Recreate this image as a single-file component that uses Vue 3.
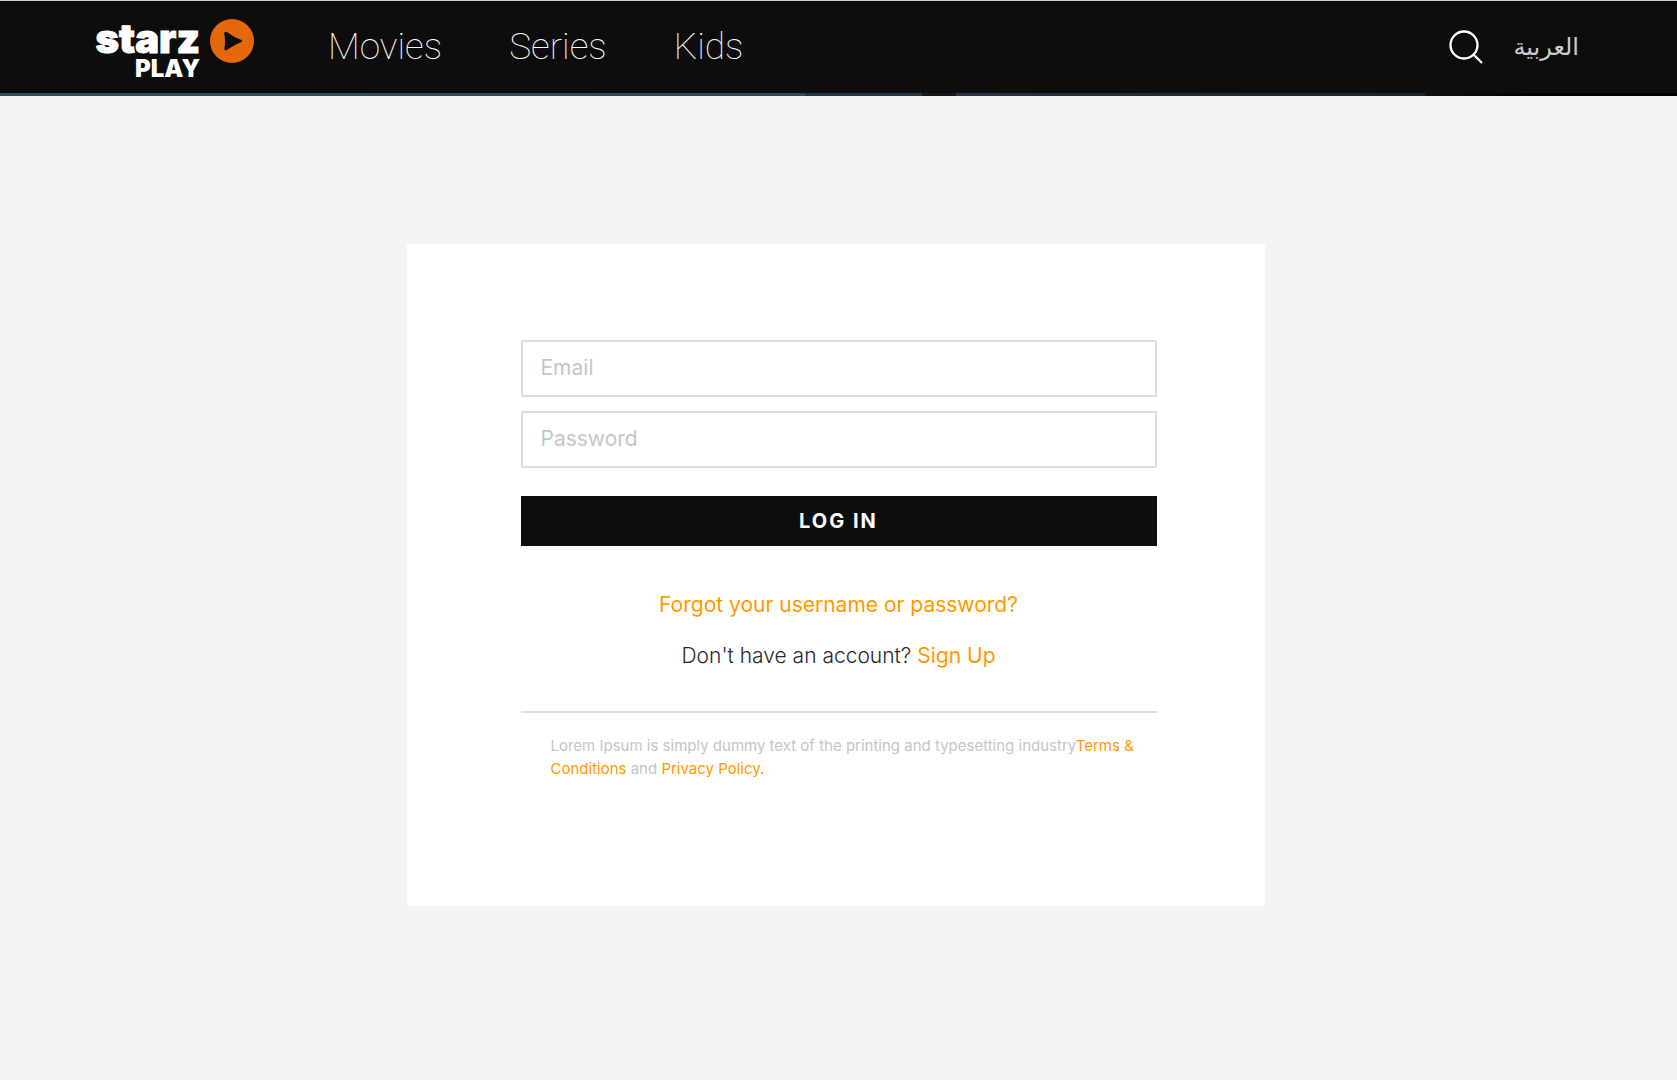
<script setup>
import { ref } from 'vue'

const navigation = ['Movies', 'Series', 'Kids']
const email = ref('')
const password = ref('')
</script>

<template>
  <div class="page">
    <header class="header">
      <a class="brand" href="#" aria-label="Starz Play">
        <span class="wordmark"><span class="starz">starz</span><span class="play">PLAY</span></span>
        <svg class="play-icon" viewBox="0 0 44 44" aria-hidden="true">
          <circle cx="22" cy="22" r="22" fill="#e5680c" />
          <path d="M14.2 14.500c0-1.700 1.400-2.400 2.800-1.400 4.500 3.300 9 5.800 14 7.700 1.400.6 1.400 1.900 0 2.500-5 2-9.500 4.500-14 7.700-1.400 1-2.800.3-2.600-1.400.8-5 .8-10-.2-15.100Z" fill="#0e0e0e" />
        </svg>
      </a>
      <nav class="nav" aria-label="Main">
        <a v-for="item in navigation" :key="item" href="#">{{ item }}</a>
      </nav>
      <div class="tools">
        <button class="search" type="button" aria-label="Search">
          <svg viewBox="0 0 34 34" fill="none" stroke="#fff" stroke-width="2.300" aria-hidden="true">
            <circle cx="15" cy="15" r="13.500" />
            <path d="m24 24 9 9" />
          </svg>
        </button>
        <a class="language" href="#" lang="ar" dir="rtl">العربية</a>
      </div>
    </header>

    <main class="main">
      <section class="card">
        <form class="form" @submit.prevent>
          <input v-model="email" type="email" placeholder="Email" aria-label="Email" />
          <input v-model="password" type="password" placeholder="Password" aria-label="Password" />
          <button class="login" type="submit">LOG IN</button>
        </form>
        <p class="help"><a href="#">Forgot your username or password?</a></p>
        <p class="help signup">Don't have an account? <a href="#">Sign Up</a></p>
        <p class="legal">
          Lorem Ipsum is simply dummy text of the printing and typesetting industry<a href="#">Terms &amp; Conditions</a> and <a href="#">Privacy Policy.</a>
        </p>
      </section>
    </main>
  </div>
</template>

<style>
body {
  background: #f3f3f3;
}
</style>

<style scoped>
.page {
  font-family: Inter, "Liberation Sans", sans-serif;
  color: #28282d;
}

.page * {
  box-sizing: border-box;
}

a {
  color: #f90;
  text-decoration: none;
}

.header {
  display: flex;
  align-items: center;
  height: 96px;
  padding: 0 98px 4px 96px;
  background:
    linear-gradient(90deg, #2f4f61 0, #30475e 48%, #263543 48%, #263543 55%, #12181b 55%, #12181b 57%, #263543 57%, #19242d 85%, #0e1112 85%, #000 92%) bottom / 100% 3px no-repeat,
    #0d0d0d;
  border-top: 1px solid #c8cccb;
}

.brand {
  display: flex;
  align-items: flex-start;
  gap: 10px;
  width: 232px;
  height: 56px;
  color: #fff;
}

.wordmark {
  display: flex;
  flex-direction: column;
  align-items: flex-end;
  width: 104px;
  font-weight: 900;
}

.starz {
  font-size: 40px;
  line-height: 40px;
  -webkit-text-stroke: 1px #fff;
}

.play {
  font-size: 24px;
  line-height: 20px;
}

.play-icon {
  width: 44px;
  height: 44px;
}

.nav {
  display: flex;
  gap: 67px;
  font-family: Roboto, "Liberation Sans", sans-serif;
  font-size: 37px;
  font-weight: 100;
}

.nav a {
  color: #fff;
}

.tools {
  display: flex;
  align-items: center;
  gap: 30px;
  margin-left: auto;
}

.search {
  padding: 0;
  background: none;
  border: 0;
}

.search svg {
  display: block;
  width: 34px;
  height: 34px;
}

.language {
  color: #ccc;
  font-family: "DejaVu Sans", sans-serif;
  font-size: 24px;
}

.main {
  padding: 148px 30px 174px 24px;
}

.card {
  width: 100%;
  max-width: 858px;
  min-height: 662px;
  margin: 0 auto;
  padding: 96px 108px 96px 114px;
  background: #fff;
}

.form {
  display: flex;
  flex-direction: column;
  gap: 14px;
}

.form input {
  width: 100%;
  height: 57px;
  padding: 0 18px 2px;
  color: #28282d;
  background: #fff;
  border: 2px solid #ddd;
  border-radius: 0;
  font: 21px Inter, sans-serif;
}

.form input::placeholder {
  color: #c5c6ca;
  opacity: 1;
}

.login {
  height: 50px;
  margin-top: 14px;
  color: #fff;
  background: #0d0d0d;
  border: 0;
  font: 700 20px Inter, sans-serif;
  letter-spacing: 2px;
}

.help {
  margin: 20px 0 0;
  font-size: 21px;
  line-height: 31px;
  text-align: center;
}

.form + .help {
  margin-top: 43px;
}

.signup {
  font-weight: 300;
}

.signup a {
  font-weight: 400;
}

.legal {
  margin: 40px 0 0;
  padding: 21px 12px 0 30px;
  color: #c5c6ca;
  border-top: 2px solid #ddd;
  font-size: 15px;
  line-height: 23px;
}
</style>
